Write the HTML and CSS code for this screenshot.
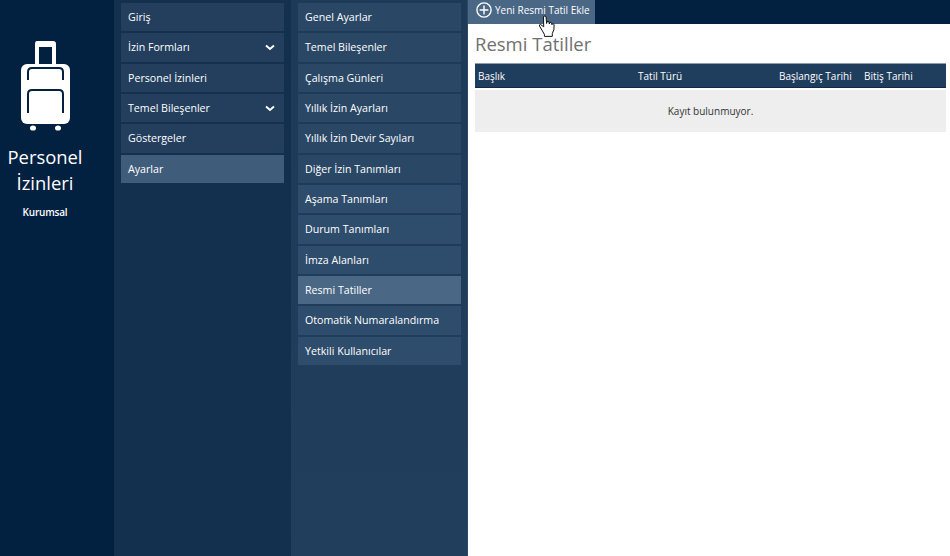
FILE: index.html
```html
<!DOCTYPE html>
<html lang="tr">
<head>
<meta charset="utf-8">
<title>Resmi Tatiller</title>
<link rel="stylesheet" href="styles.css">
</head>
<body>
<div class="app">
  <aside class="brand">
    <svg class="brand-icon" width="49" height="90" viewBox="0 0 49 90">
      <path class="fg" fill-rule="evenodd" d="M16 0h16q3 0 3 3v20H14V3q0-3 2-3zM18 6v17h13V6z"/>
      <rect class="fg" x="0" y="23" width="49" height="60" rx="6"/>
      <path class="line" d="M7 39V31q0-4 4-4H38q4 0 4 4V39M7 72V53q0-4 4-4H38q4 0 4 4V72"/>
      <ellipse class="fg" cx="12" cy="87" rx="3" ry="2.6"/>
      <ellipse class="fg" cx="37" cy="87" rx="3" ry="2.6"/>
    </svg>
    <div class="brand-title">Personel İzinleri</div>
    <div class="brand-sub">Kurumsal</div>
  </aside>
  <nav class="menu menu-first">
    <a class="item">Giriş</a>
    <a class="item">İzin Formları<svg class="chev" width="10" height="7" viewBox="0 0 10 7"><path d="M1 1.5l4 3.5 4-3.5"/></svg></a>
    <a class="item">Personel İzinleri</a>
    <a class="item">Temel Bileşenler<svg class="chev" width="10" height="7" viewBox="0 0 10 7"><path d="M1 1.5l4 3.5 4-3.5"/></svg></a>
    <a class="item">Göstergeler</a>
    <a class="item active">Ayarlar</a>
  </nav>
  <nav class="menu menu-second">
    <a class="item">Genel Ayarlar</a>
    <a class="item">Temel Bileşenler</a>
    <a class="item">Çalışma Günleri</a>
    <a class="item">Yıllık İzin Ayarları</a>
    <a class="item">Yıllık İzin Devir Sayıları</a>
    <a class="item">Diğer İzin Tanımları</a>
    <a class="item">Aşama Tanımları</a>
    <a class="item">Durum Tanımları</a>
    <a class="item">İmza Alanları</a>
    <a class="item active">Resmi Tatiller</a>
    <a class="item">Otomatik Numaralandırma</a>
    <a class="item">Yetkili Kullanıcılar</a>
  </nav>
  <main class="content">
    <div class="toolbar">
      <a class="add-btn">
        <svg width="16" height="16" viewBox="0 0 16 16"><circle cx="8" cy="8" r="7.1"/><path d="M8 3.6v8.8M3.6 8h8.8"/></svg>
        <span>Yeni Resmi Tatil Ekle</span>
      </a>
    </div>
    <div class="page">
      <h1 class="page-title">Resmi Tatiller</h1>
      <div class="table-head">
        <span>Başlık</span>
        <span>Tatil Türü</span>
        <span>Başlangıç Tarihi</span>
        <span>Bitiş Tarihi</span>
      </div>
      <div class="table-empty">Kayıt bulunmuyor.</div>
    </div>
    <svg class="cursor" width="19" height="23" viewBox="0 0 19 23">
      <path d="M5.5 1.5q1.5-1 2.5 0l.6 7 .4-1.8q1.3-.8 2 .2l.3 2 .5-1.4q1.3-.6 1.9.4l.2 1.8.6-.9q1.3-.3 1.6 1l-.2 5-1.6 3.6v3H6.5l-.2-2.2L1.5 11q-.4-1.4.9-1.6l3.3 2.4z"/>
    </svg>
  </main>
</div>
</body>
</html>
```
FILE: styles.css
```css
* { box-sizing: border-box; }
html, body { margin: 0; height: 100%; }
body { font-family: "Open Sans", sans-serif; font-size: 10.65px; background: #fff; overflow: hidden; }
.app { display: flex; width: 950px; height: 556px; }
.brand {
  width: 114px; flex: none; background: #02203f; color: #fff;
  display: flex; flex-direction: column; align-items: center; padding: 41px 24px 0 0;
}
.fg { fill: #fff; }
.line { fill: none; stroke: #02203f; stroke-width: 2; }
.brand-title { font-size: 18.4px; line-height: 26px; text-align: center; width: 90px; margin-top: 13px; }
.brand-sub { font-size: 10px; font-weight: 600; letter-spacing: -.2px; line-height: 14px; margin-top: 9px; }
.menu { width: 177px; flex: none; padding: 3px 7px 0; display: flex; flex-direction: column; gap: 2px; }
.menu-first { background: #13304f; }
.menu-second { background: linear-gradient(#1d3b59, #213f5d); box-shadow: inset -1px 0 0 #2c4a68; }
.item {
  height: 28.33px; padding: 0 7px .2px; color: #fff; display: flex; align-items: center;
  justify-content: space-between; background: #233f5d; white-space: nowrap;
}
.menu-second .item { background: #2a4866; }
.menu-second .item:nth-child(n+7) { background: #2e4c6b; }
.item.active, .menu-second .item.active { background: #4a6785; }
.menu-first .item.active { background: #405c7b; }
.chev { margin-right: 2px; fill: none; stroke: #fff; stroke-width: 2; }
.content { flex: 1; position: relative; min-width: 0; display: flex; flex-direction: column; }
.toolbar { height: 24px; flex: none; background: #02203f; display: flex; }
.add-btn {
  width: 127px; background: #4a6785; color: #fff; display: flex; align-items: center;
  gap: 3px; padding: 0 0 4px 8px; white-space: nowrap; font-size: 10px;
}
.add-btn svg { fill: none; stroke: #fff; stroke-width: 1.4; flex: none; }
.page { padding: 0 4px 0 7px; font-size: 10px; }
.page-title { margin: 7px 0; font-size: 18.5px; font-weight: 400; line-height: 25px; color: #707070; }
.table-head {
  height: 25px; background: #1f3d5c; color: #fff; display: grid;
  grid-template-columns: 160px 141px 85px 1fr; align-items: center; padding: 1px 0 0 3px;
  border-top: 1px solid #8a9cb0; border-bottom: 1px solid #10294a;
}
.table-empty {
  margin-top: 2px; height: 42px; background: #eee; color: #333; display: flex;
  align-items: center; justify-content: center;
}
.cursor { position: absolute; left: 70px; top: 15px; fill: #fff; stroke: #111; stroke-width: 1; }
```
